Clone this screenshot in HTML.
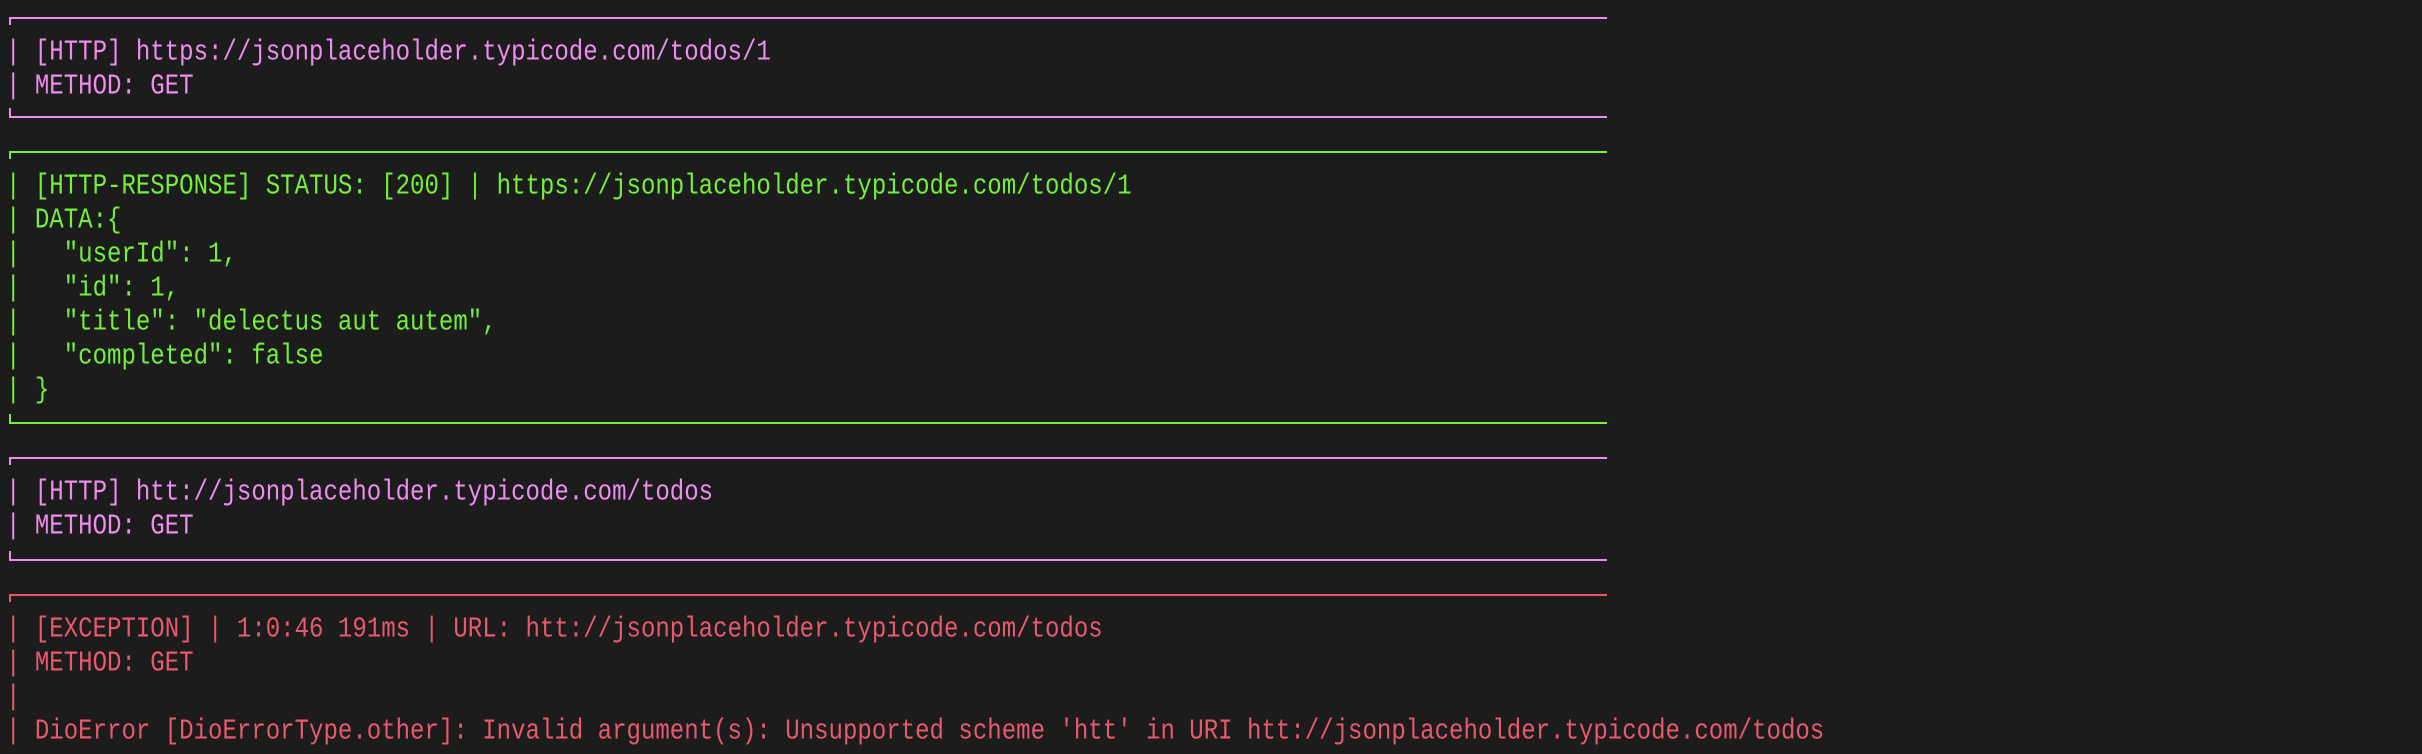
<!DOCTYPE html>
<html><head><meta charset="utf-8"><style>
html,body{margin:0;padding:0;background:#1c1c1c;width:2422px;height:754px;overflow:hidden}
.l{position:absolute;left:6px;height:34.3px;line-height:34.3px;font-family:"Liberation Mono","DejaVu Sans Mono",monospace;font-size:24.05px;white-space:pre;transform:scaleY(1.18);transform-origin:0 55%;margin-top:2px}
.b{position:absolute;left:9px;width:1598px;height:8px;border-top:2px solid;border-left:2px solid;box-sizing:border-box}
.p{color:#ef8cef;border-color:#ef8cef}
.g{color:#74ef3c;border-color:#74ef3c}
.r{color:#e8596d;border-color:#e8596d}
</style></head><body>
<div class="b p" style="top:17px"></div>
<div class="l p" style="top:35px">| [HTTP] https://jsonplaceholder.typicode.com/todos/1</div>
<div class="l p" style="top:69px">| METHOD: GET</div>
<div class="b p" style="top:108px;border-top:none;border-bottom:2px solid #ef8cef;height:10px"></div>

<div class="b g" style="top:151px"></div>
<div class="l g" style="top:169px">| [HTTP-RESPONSE] STATUS: [200] | https://jsonplaceholder.typicode.com/todos/1</div>
<div class="l g" style="top:203px">| DATA:{</div>
<div class="l g" style="top:237px">|   "userId": 1,</div>
<div class="l g" style="top:271px">|   "id": 1,</div>
<div class="l g" style="top:305px">|   "title": "delectus aut autem",</div>
<div class="l g" style="top:339px">|   "completed": false</div>
<div class="l g" style="top:373px">| }</div>
<div class="b g" style="top:414px;border-top:none;border-bottom:2px solid #74ef3c;height:10px"></div>

<div class="b p" style="top:457px"></div>
<div class="l p" style="top:475px">| [HTTP] htt://jsonplaceholder.typicode.com/todos</div>
<div class="l p" style="top:509px">| METHOD: GET</div>
<div class="b p" style="top:551px;border-top:none;border-bottom:2px solid #ef8cef;height:10px"></div>

<div class="b r" style="top:594px"></div>
<div class="l r" style="top:612px">| [EXCEPTION] | 1:0:46 191ms | URL: htt://jsonplaceholder.typicode.com/todos</div>
<div class="l r" style="top:646px">| METHOD: GET</div>
<div class="l r" style="top:680px">|</div>
<div class="l r" style="top:714px">| DioError [DioErrorType.other]: Invalid argument(s): Unsupported scheme 'htt' in URI htt://jsonplaceholder.typicode.com/todos</div>
</body></html>
